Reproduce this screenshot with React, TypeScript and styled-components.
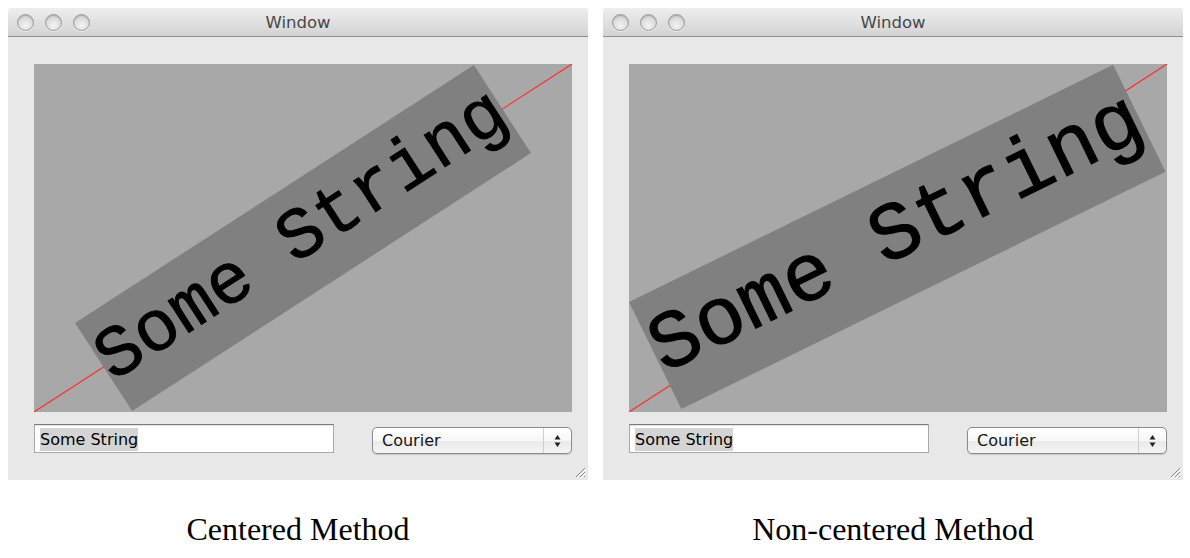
import * as React from 'react'
import styled, { createGlobalStyle } from 'styled-components'

const GlobalStyle = createGlobalStyle`
  html, body {
    margin: 0;
    background: #ffffff;
  }
`

const Page = styled.div`
  display: flex;
  gap: 15px;
  padding: 8px 0 0 8px;
`

const Column = styled.div`
  display: flex;
  flex-direction: column;
  width: 580px;
`

const Window = styled.div`
  position: relative;
  display: flex;
  flex-direction: column;
  width: 580px;
  height: 472px;
  background: #e8e8e8;
  border-radius: 4px 4px 0 0;
  font-family: 'DejaVu Sans', 'Liberation Sans', sans-serif;
`

const TitleBar = styled.div`
  display: grid;
  grid-template-columns: 1fr auto 1fr;
  align-items: center;
  height: 28px;
  border-bottom: 1px solid #8f8f8f;
  border-radius: 4px 4px 0 0;
  background: linear-gradient(#eeeeee, #d3d3d3);
`

const Lights = styled.div`
  display: flex;
  gap: 11px;
  padding-left: 9px;
`

const Light = styled.span`
  width: 15px;
  height: 15px;
  border-radius: 50%;
  border: 1px solid #9b9b9b;
  background: radial-gradient(circle at 50% 70%, #f4f4f4 0%, #dcdcdc 55%, #c4c4c4 100%);
  box-shadow: inset 0 1px 1px rgba(0, 0, 0, 0.18), 0 1px 0 rgba(255, 255, 255, 0.6);
`

const Title = styled.span`
  font-size: 16.5px;
  color: #474747;
  padding-top: 1px;
`

const Body = styled.div`
  display: flex;
  flex-direction: column;
  gap: 12px;
  padding: 27px 16px 0 26px;
`

const Canvas = styled.svg`
  display: block;
  width: 538px;
  height: 348px;
  background: #a8a8a8;
`

const Controls = styled.div`
  display: flex;
  justify-content: space-between;
  align-items: flex-start;
`

const TextField = styled.div`
  box-sizing: border-box;
  width: 300px;
  height: 29px;
  padding: 3px 5px 0;
  background: #ffffff;
  border: 1px solid #a9a9a9;
  border-top-color: #7b7b7b;
  box-shadow: inset 0 1px 1px rgba(0, 0, 0, 0.12);
`

const Selection = styled.span`
  display: inline-block;
  height: 23px;
  line-height: 23px;
  font-size: 16px;
  color: #000000;
  background: #d4d4d4;
`

const Popup = styled.div`
  box-sizing: border-box;
  display: flex;
  align-items: center;
  width: 200px;
  height: 27px;
  margin-top: 3px;
  border: 1px solid #8c8c8c;
  border-radius: 5px;
  background: linear-gradient(#ffffff 0%, #f7f7f7 50%, #e9e9e9 51%, #f4f4f4 100%);
  box-shadow: 0 1px 1px rgba(0, 0, 0, 0.15);
`

const PopupLabel = styled.span`
  flex: 1;
  padding-left: 9px;
  font-size: 16px;
  color: #151515;
`

const PopupArrows = styled.span`
  display: flex;
  align-items: center;
  justify-content: center;
  width: 27px;
  height: 100%;
  border-left: 1px solid #cfcfcf;
`

const Grip = styled.svg`
  position: absolute;
  right: 2px;
  bottom: 2px;
`

const Caption = styled.div`
  margin-top: 31px;
  text-align: center;
  font-family: 'Liberation Serif', 'Times New Roman', serif;
  font-size: 32px;
  line-height: 37px;
  color: #000000;
`

type SceneProps = {
  transform: string,
}

const Scene = ({ transform }: SceneProps) => (
  <Canvas viewBox='0 0 538 348'>
    <line x1={0} y1={348} x2={538} y2={0} stroke='#ff2d2d' strokeWidth={1.2} />
    <g transform={transform}>
      <rect x={0} y={0} width={475} height={105} fill='#808080' />
      <text
        x={0}
        y={70}
        fontFamily="'Liberation Mono', 'Courier New', monospace"
        fontSize={72}
        fill='#000'
        stroke='#000'
        strokeWidth={0.9}
      >
        Some String
      </text>
    </g>
  </Canvas>
)

type Props = {
  caption: string,
  transform: string,
}

const DemoWindow = ({ caption, transform }: Props) => (
  <Column>
    <Window>
      <TitleBar>
        <Lights>
          <Light />
          <Light />
          <Light />
        </Lights>
        <Title>Window</Title>
        <span />
      </TitleBar>

      <Body>
        <Scene transform={transform} />
        <Controls>
          <TextField>
            <Selection>Some String</Selection>
          </TextField>
          <Popup>
            <PopupLabel>Courier</PopupLabel>
            <PopupArrows>
              <svg width='7' height='14' viewBox='0 0 7 14'>
                <path d='M3.5 1 L6.5 5.5 L0.5 5.5 Z' fill='#222' />
                <path d='M3.5 13 L6.5 8.5 L0.5 8.5 Z' fill='#222' />
              </svg>
            </PopupArrows>
          </Popup>
        </Controls>
      </Body>

      <Grip width='12' height='12' viewBox='0 0 12 12'>
        <path d='M11 2 L2 11 M11 6 L6 11 M11 10 L10 11' stroke='#8a8a8a' strokeWidth='1' />
        <path d='M12 3 L3 12 M12 7 L7 12' stroke='#ffffff' strokeWidth='1' />
      </Grip>
    </Window>
    <Caption>{caption}</Caption>
  </Column>
)

const App = () => (
  <>
    <GlobalStyle />
    <Page>
      <DemoWindow
        caption='Centered Method'
        transform='translate(269 174) rotate(-32.9) translate(-237.5 -52.5)'
      />
      <DemoWindow
        caption='Non-centered Method'
        transform='translate(0 238) rotate(-26.1) scale(1.135)'
      />
    </Page>
  </>
)

export default App
